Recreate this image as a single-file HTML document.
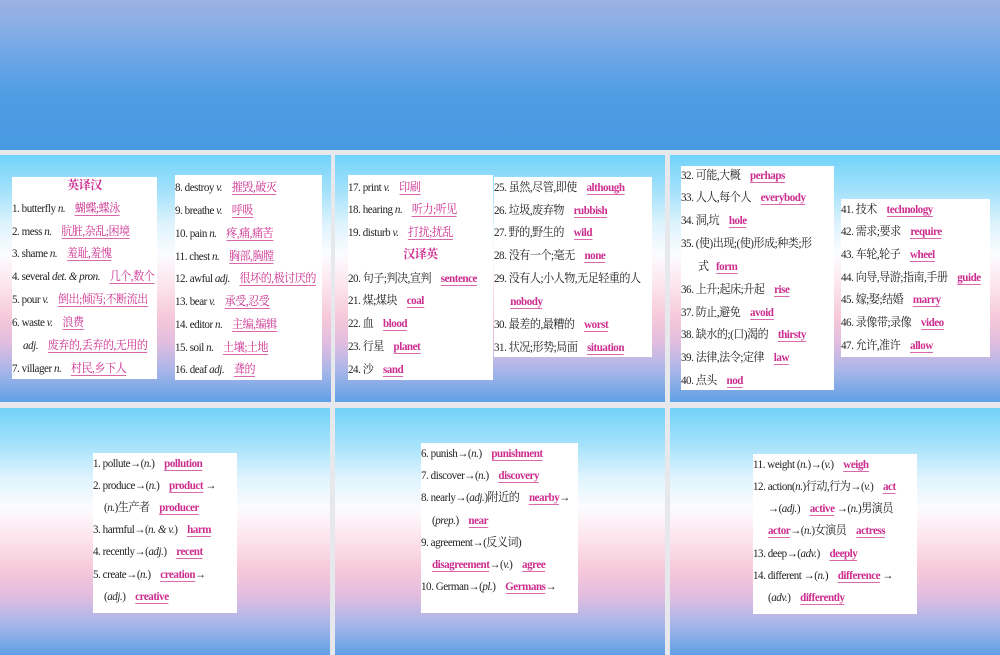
<!DOCTYPE html>
<html><head><meta charset="utf-8"><style>
*{margin:0;padding:0;box-sizing:border-box}
body{width:1000px;height:600px;overflow:hidden;background:#e6e8ec;position:relative;font-family:"Liberation Serif","Noto Serif CJK SC",serif;color:#222}
.top{position:absolute;left:0;top:0;width:1000px;height:150px;background:linear-gradient(#9cb1e4 0%,#8db0e6 15%,#64a3e6 45%,#4e9de3 65%,#4799e1 100%)}
.s{position:absolute;overflow:hidden;background:linear-gradient(#72d2fa 0%,#a6e2fb 15%,#def3fd 28%,#fbfcff 40%,#fde6ee 52%,#f6c8d9 66%,#e2bddf 76%,#aab6e8 87%,#5fa0e6 100%)}
.b{position:absolute;background:#fff}
.l{position:absolute;left:0;white-space:nowrap;font-size:12px;line-height:16px;letter-spacing:-0.5px;transform:scaleX(.92);transform-origin:0 0}
.p{color:#cc2d8e;border-bottom:1px solid #d86aac;margin-left:8px}
.e{color:#cc2d8e;font-weight:bold;border-bottom:1px solid #d86aac;margin-left:8px}
i{font-style:italic}
.c{font-weight:bold;color:#cc2d8e;transform:none}
</style></head><body>
<div class="top"></div>

<!-- slide 1 -->
<div class="s" style="left:0;top:155px;width:331px;height:247px">
 <div class="b" style="left:12px;top:22px;width:145px;height:202px">
  <div class="l c" style="top:0;width:145px;text-align:center">英译汉</div>
  <div class="l" style="top:23px">1. butterfly <i>n.</i> <span class="p">蝴蝶;蝶泳</span></div>
  <div class="l" style="top:46px">2. mess <i>n.</i> <span class="p">肮脏,杂乱;困境</span></div>
  <div class="l" style="top:68px">3. shame <i>n.</i> <span class="p">羞耻,羞愧</span></div>
  <div class="l" style="top:91px">4. several <i>det. &amp; pron.</i> <span class="p">几个,数个</span></div>
  <div class="l" style="top:114px">5. pour <i>v.</i> <span class="p">倒出;倾泻;不断流出</span></div>
  <div class="l" style="top:137px">6. waste <i>v.</i> <span class="p">浪费</span></div>
  <div class="l" style="top:160px;left:11px"><i>adj.</i> <span class="p">废弃的,丢弃的,无用的</span></div>
  <div class="l" style="top:183px">7. villager <i>n.</i> <span class="p">村民,乡下人</span></div>
 </div>
 <div class="b" style="left:175px;top:20px;width:147px;height:205px">
  <div class="l" style="top:4px">8. destroy <i>v.</i> <span class="p">摧毁,破灭</span></div>
  <div class="l" style="top:27px">9. breathe <i>v.</i> <span class="p">呼吸</span></div>
  <div class="l" style="top:50px">10. pain <i>n.</i> <span class="p">疼,痛,痛苦</span></div>
  <div class="l" style="top:73px">11. chest <i>n.</i> <span class="p">胸部,胸膛</span></div>
  <div class="l" style="top:95px">12. awful <i>adj.</i> <span class="p">很坏的,极讨厌的</span></div>
  <div class="l" style="top:118px">13. bear <i>v.</i> <span class="p">承受,忍受</span></div>
  <div class="l" style="top:141px">14. editor <i>n.</i> <span class="p">主编,编辑</span></div>
  <div class="l" style="top:164px">15. soil <i>n.</i> <span class="p">土壤;土地</span></div>
  <div class="l" style="top:186px">16. deaf <i>adj.</i> <span class="p">聋的</span></div>
 </div>
</div>

<!-- slide 2 -->
<div class="s" style="left:335px;top:155px;width:330px;height:247px">
 <div class="b" style="left:13px;top:20px;width:145px;height:205px">
  <div class="l" style="top:4px">17. print <i>v.</i> <span class="p">印刷</span></div>
  <div class="l" style="top:26px">18. hearing <i>n.</i> <span class="p">听力;听见</span></div>
  <div class="l" style="top:49px">19. disturb <i>v.</i> <span class="p">打扰;扰乱</span></div>
  <div class="l c" style="top:71px;width:145px;text-align:center">汉译英</div>
  <div class="l" style="top:95px">20. 句子;判决,宣判 <span class="e">sentence</span></div>
  <div class="l" style="top:117px">21. 煤;煤块 <span class="e">coal</span></div>
  <div class="l" style="top:140px">22. 血 <span class="e">blood</span></div>
  <div class="l" style="top:163px">23. 行星 <span class="e">planet</span></div>
  <div class="l" style="top:186px">24. 沙 <span class="e">sand</span></div>
 </div>
 <div class="b" style="left:159px;top:22px;width:158px;height:180px">
  <div class="l" style="top:2px">25. 虽然,尽管,即使 <span class="e">although</span></div>
  <div class="l" style="top:25px">26. 垃圾,废弃物 <span class="e">rubbish</span></div>
  <div class="l" style="top:47px">27. 野的,野生的 <span class="e">wild</span></div>
  <div class="l" style="top:70px">28. 没有一个;毫无 <span class="e">none</span></div>
  <div class="l" style="top:93px">29. 没有人;小人物,无足轻重的人</div>
  <div class="l" style="top:116px;left:8px"><span class="e" style="margin-left:9px">nobody</span></div>
  <div class="l" style="top:139px">30. 最差的,最糟的 <span class="e">worst</span></div>
  <div class="l" style="top:162px">31. 状况;形势;局面 <span class="e">situation</span></div>
 </div>
</div>

<!-- slide 3 -->
<div class="s" style="left:670px;top:155px;width:330px;height:247px">
 <div class="b" style="left:11px;top:11px;width:153px;height:224px">
  <div class="l" style="top:1px">32. 可能,大概 <span class="e">perhaps</span></div>
  <div class="l" style="top:23px">33. 人人,每个人 <span class="e">everybody</span></div>
  <div class="l" style="top:46px">34. 洞,坑 <span class="e">hole</span></div>
  <div class="l" style="top:69px">35. (使)出现;(使)形成;种类;形</div>
  <div class="l" style="top:92px;left:17px">式<span class="e">form</span></div>
  <div class="l" style="top:115px">36. 上升;起床;升起 <span class="e">rise</span></div>
  <div class="l" style="top:138px">37. 防止,避免 <span class="e">avoid</span></div>
  <div class="l" style="top:160px">38. 缺水的;(口)渴的 <span class="e">thirsty</span></div>
  <div class="l" style="top:183px">39. 法律,法令;定律 <span class="e">law</span></div>
  <div class="l" style="top:206px">40. 点头 <span class="e">nod</span></div>
 </div>
 <div class="b" style="left:171px;top:44px;width:149px;height:158px">
  <div class="l" style="top:2px">41. 技术 <span class="e">technology</span></div>
  <div class="l" style="top:24px">42. 需求;要求 <span class="e">require</span></div>
  <div class="l" style="top:47px">43. 车轮,轮子 <span class="e">wheel</span></div>
  <div class="l" style="top:70px">44. 向导,导游;指南,手册 <span class="e">guide</span></div>
  <div class="l" style="top:92px">45. 嫁;娶;结婚 <span class="e">marry</span></div>
  <div class="l" style="top:115px">46. 录像带;录像 <span class="e">video</span></div>
  <div class="l" style="top:138px">47. 允许,准许 <span class="e">allow</span></div>
 </div>
</div>

<!-- slide 4 -->
<div class="s" style="left:0;top:408px;width:330px;height:247px">
 <div class="b" style="left:93px;top:45px;width:144px;height:160px">
  <div class="l" style="top:2px">1. pollute→(<i>n.</i>) <span class="e">pollution</span></div>
  <div class="l" style="top:24px">2. produce→(<i>n.</i>) <span class="e">product</span> →</div>
  <div class="l" style="top:46px;left:11px">(<i>n.</i>)生产者 <span class="e">producer</span></div>
  <div class="l" style="top:68px">3. harmful→(<i>n. &amp; v.</i>) <span class="e">harm</span></div>
  <div class="l" style="top:90px">4. recently→(<i>adj.</i>) <span class="e">recent</span></div>
  <div class="l" style="top:113px">5. create→(<i>n.</i>) <span class="e">creation</span>→</div>
  <div class="l" style="top:135px;left:11px">(<i>adj.</i>) <span class="e">creative</span></div>
 </div>
</div>

<!-- slide 5 -->
<div class="s" style="left:335px;top:408px;width:330px;height:247px">
 <div class="b" style="left:86px;top:35px;width:157px;height:170px">
  <div class="l" style="top:2px">6. punish→(<i>n.</i>) <span class="e">punishment</span></div>
  <div class="l" style="top:24px">7. discover→(<i>n.</i>) <span class="e">discovery</span></div>
  <div class="l" style="top:46px">8. nearly→(<i>adj.</i>)附近的 <span class="e">nearby</span>→</div>
  <div class="l" style="top:69px;left:11px">(<i>prep.</i>) <span class="e">near</span></div>
  <div class="l" style="top:91px">9. agreement→(反义词)</div>
  <div class="l" style="top:113px;left:11px"><span class="e" style="margin-left:0">disagreement</span>→(<i>v.</i>) <span class="e">agree</span></div>
  <div class="l" style="top:135px">10. German→(<i>pl.</i>) <span class="e">Germans</span>→</div>
 </div>
</div>

<!-- slide 6 -->
<div class="s" style="left:670px;top:408px;width:330px;height:247px">
 <div class="b" style="left:83px;top:46px;width:164px;height:160px">
  <div class="l" style="top:2px">11. weight (<i>n.</i>)→(<i>v.</i>) <span class="e">weigh</span></div>
  <div class="l" style="top:24px">12. action(<i>n.</i>)行动,行为→(<i>v.</i>) <span class="e">act</span></div>
  <div class="l" style="top:46px;left:15px">→(<i>adj.</i>) <span class="e">active</span> →(<i>n.</i>)男演员</div>
  <div class="l" style="top:68px;left:15px"><span class="e" style="margin-left:0">actor</span>→(<i>n.</i>)女演员 <span class="e">actress</span></div>
  <div class="l" style="top:91px">13. deep→(<i>adv.</i>) <span class="e">deeply</span></div>
  <div class="l" style="top:113px">14. different →(<i>n.</i>) <span class="e">difference</span> →</div>
  <div class="l" style="top:135px;left:15px">(<i>adv.</i>) <span class="e">differently</span></div>
 </div>
</div>
</body></html>
